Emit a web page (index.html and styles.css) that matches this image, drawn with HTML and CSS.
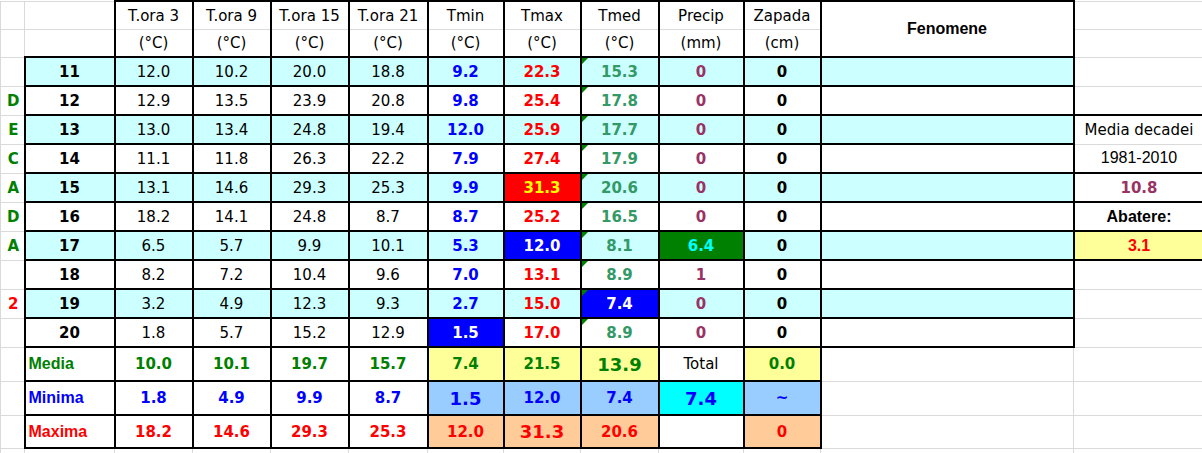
FILE: index.html
```html
<!DOCTYPE html>
<html>
<head>
<meta charset="utf-8">
<link rel="stylesheet" href="styles.css">
</head>
<body>
<table class="sheet">
<colgroup>
<col class="w-let"><col class="w-day"><col class="w-78"><col class="w-78"><col class="w-78"><col class="w-79"><col class="w-76"><col class="w-77"><col class="w-78"><col class="w-85"><col class="w-77"><col class="w-fen"><col class="w-right">
</colgroup>
<tr class="h1">
<td class="l"></td><td></td>
<td class="ht">T.ora 3</td><td class="ht">T.ora 9</td><td class="ht">T.ora 15</td><td class="ht">T.ora 21</td>
<td class="ht">Tmin</td><td class="ht">Tmax</td><td class="ht">Tmed</td><td class="ht">Precip</td><td class="ht">Zapada</td>
<td class="b fen" rowspan="2">Fenomene</td><td class="rt"></td>
</tr>
<tr class="h2">
<td class="l"></td><td></td>
<td class="hb">(°C)</td><td class="hb">(°C)</td><td class="hb">(°C)</td><td class="hb">(°C)</td>
<td class="hb">(°C)</td><td class="hb">(°C)</td><td class="hb">(°C)</td><td class="hb">(mm)</td><td class="hb">(cm)</td>
<td class="rt"></td>
</tr>

<tr class="d cy">
<td class="l"></td><td class="b m day">11</td>
<td class="b m n">12.0</td><td class="b m n">10.2</td><td class="b m n">20.0</td><td class="b m n">18.8</td>
<td class="b m mn">9.2</td><td class="b m mx">22.3</td><td class="b m md">15.3</td><td class="b m pr">0</td><td class="b m zp">0</td>
<td class="b m"></td><td class="rt"></td>
</tr>
<tr class="d">
<td class="l">D</td><td class="b m day">12</td>
<td class="b m n">12.9</td><td class="b m n">13.5</td><td class="b m n">23.9</td><td class="b m n">20.8</td>
<td class="b m mn">9.8</td><td class="b m mx">25.4</td><td class="b m md">17.8</td><td class="b m pr">0</td><td class="b m zp">0</td>
<td class="b m"></td><td class="rt"></td>
</tr>
<tr class="d cy">
<td class="l">E</td><td class="b m day">13</td>
<td class="b m n">13.0</td><td class="b m n">13.4</td><td class="b m n">24.8</td><td class="b m n">19.4</td>
<td class="b m mn">12.0</td><td class="b m mx">25.9</td><td class="b m md">17.7</td><td class="b m pr">0</td><td class="b m zp">0</td>
<td class="b m"></td><td class="rt r-top">Media decadei</td>
</tr>
<tr class="d">
<td class="l">C</td><td class="b m day">14</td>
<td class="b m n">11.1</td><td class="b m n">11.8</td><td class="b m n">26.3</td><td class="b m n">22.2</td>
<td class="b m mn">7.9</td><td class="b m mx">27.4</td><td class="b m md">17.9</td><td class="b m pr">0</td><td class="b m zp">0</td>
<td class="b m"></td><td class="rt r-bot ar">1981-2010</td>
</tr>
<tr class="d cy">
<td class="l">A</td><td class="b m day">15</td>
<td class="b m n">13.1</td><td class="b m n">14.6</td><td class="b m n">29.3</td><td class="b m n">25.3</td>
<td class="b m mn">9.9</td><td class="b m mx f-red">31.3</td><td class="b m md">20.6</td><td class="b m pr">0</td><td class="b m zp">0</td>
<td class="b m"></td><td class="rt b pr">10.8</td>
</tr>
<tr class="d">
<td class="l">D</td><td class="b m day">16</td>
<td class="b m n">18.2</td><td class="b m n">14.1</td><td class="b m n">24.8</td><td class="b m n">8.7</td>
<td class="b m mn">8.7</td><td class="b m mx">25.2</td><td class="b m md">16.5</td><td class="b m pr">0</td><td class="b m zp">0</td>
<td class="b m"></td><td class="rt b arb">Abatere:</td>
</tr>
<tr class="d cy">
<td class="l">A</td><td class="b m day">17</td>
<td class="b m n">6.5</td><td class="b m n">5.7</td><td class="b m n">9.9</td><td class="b m n">10.1</td>
<td class="b m mn">5.3</td><td class="b m mx f-blue">12.0</td><td class="b m md">8.1</td><td class="b m pr f-green">6.4</td><td class="b m zp">0</td>
<td class="b m"></td><td class="rt b arb dev">3.1</td>
</tr>
<tr class="d">
<td class="l"></td><td class="b m day">18</td>
<td class="b m n">8.2</td><td class="b m n">7.2</td><td class="b m n">10.4</td><td class="b m n">9.6</td>
<td class="b m mn">7.0</td><td class="b m mx">13.1</td><td class="b m md">8.9</td><td class="b m pr">1</td><td class="b m zp">0</td>
<td class="b m"></td><td class="rt"></td>
</tr>
<tr class="d cy">
<td class="l lr">2</td><td class="b m day">19</td>
<td class="b m n">3.2</td><td class="b m n">4.9</td><td class="b m n">12.3</td><td class="b m n">9.3</td>
<td class="b m mn">2.7</td><td class="b m mx">15.0</td><td class="b m md f-blue">7.4</td><td class="b m pr">0</td><td class="b m zp">0</td>
<td class="b m"></td><td class="rt"></td>
</tr>
<tr class="d">
<td class="l"></td><td class="b m day">20</td>
<td class="b m n">1.8</td><td class="b m n">5.7</td><td class="b m n">15.2</td><td class="b m n">12.9</td>
<td class="b m mn f-blue">1.5</td><td class="b m mx">17.0</td><td class="b m md">8.9</td><td class="b m pr">0</td><td class="b m zp">0</td>
<td class="b m"></td><td class="rt"></td>
</tr>

<tr class="s">
<td class="l"></td><td class="b lab c-g">Media</td>
<td class="b c-g">10.0</td><td class="b c-g">10.1</td><td class="b c-g">19.7</td><td class="b c-g">15.7</td>
<td class="b c-g s-yel">7.4</td><td class="b c-g s-yel">21.5</td><td class="b c-g s-yel big">13.9</td><td class="b tot">Total</td><td class="b c-g s-yel">0.0</td>
<td></td><td class="rt"></td>
</tr>
<tr class="s">
<td class="l"></td><td class="b lab c-b">Minima</td>
<td class="b c-b">1.8</td><td class="b c-b">4.9</td><td class="b c-b">9.9</td><td class="b c-b">8.7</td>
<td class="b c-b s-blu big">1.5</td><td class="b c-b s-blu">12.0</td><td class="b c-b s-blu">7.4</td><td class="b c-b s-cyan big">7.4</td><td class="b c-b s-blu">~</td>
<td></td><td class="rt"></td>
</tr>
<tr class="s s3">
<td class="l"></td><td class="b lab c-r">Maxima</td>
<td class="b c-r">18.2</td><td class="b c-r">14.6</td><td class="b c-r">29.3</td><td class="b c-r">25.3</td>
<td class="b c-r s-pea">12.0</td><td class="b c-r s-pea big">31.3</td><td class="b c-r s-pea">20.6</td><td class="b"></td><td class="b c-r s-pea">0</td>
<td></td><td class="rt"></td>
</tr>
<tr class="f">
<td class="l"></td><td></td><td></td><td></td><td></td><td></td><td></td><td></td><td></td><td></td><td></td><td></td><td class="rt"></td>
</tr>
</table>
</body>
</html>
```

FILE: styles.css
```css
html, body {
  margin: 0;
  padding: 0;
  background: #fff;
  overflow: hidden;
}

.sheet {
  border-collapse: collapse;
  table-layout: fixed;
  width: 1204px;
  font-family: "DejaVu Sans", sans-serif;
  font-size: 14px;
  color: #000;
}

.w-let { width: 24px; }
.w-day { width: 90px; }
.w-76 { width: 76px; }
.w-77 { width: 77px; }
.w-78 { width: 78px; }
.w-79 { width: 79px; }
.w-85 { width: 85px; }
.w-fen { width: 253px; }
.w-right { width: 131px; }

.sheet td {
  border: 1px solid #dadada;
  padding: 0;
  text-align: center;
  vertical-align: middle;
  white-space: nowrap;
  overflow: hidden;
}

.sheet td.b { border: 2px solid #000; }

.h1 { height: 28px; }
.h2 { height: 28px; }
.d { height: 29px; }
.s { height: 34px; }
.s3 { height: 33px; }
.f { height: 20px; }

.sheet td.ht {
  border-top: 2px solid #000;
  border-left: 2px solid #000;
  border-right: 2px solid #000;
  font-size: 15px;
  padding-top: 2px;
}
.sheet td.hb {
  border-bottom: 2px solid #000;
  border-left: 2px solid #000;
  border-right: 2px solid #000;
  font-size: 15px;
}

.fen {
  font-family: "Liberation Sans", Arial, sans-serif;
  font-weight: bold;
  font-size: 16px;
}

.l {
  font-weight: bold;
  font-size: 15px;
  color: #008000;
}
.sheet td.l { padding-left: 2px; }
.lr { color: #ff0000; }

.day { font-weight: bold; font-size: 15px; }
.n { font-size: 15px; }
.mn { font-weight: bold; font-size: 15px; color: #0000ff; }
.mx { font-weight: bold; font-size: 15px; color: #ff0000; }
.md { font-weight: bold; font-size: 15px; color: #339966; position: relative; }
.md::before {
  content: "";
  position: absolute;
  left: 0;
  top: 0;
  border-top: 6px solid #008000;
  border-right: 6px solid transparent;
}
.pr { font-weight: bold; font-size: 15px; color: #993366; }
.zp { font-weight: bold; font-size: 15px; color: #000; }

.cy .m { background: #ccffff; }

.sheet .f-red { background: #ff0000; color: #ffff00; }
.sheet .f-blue { background: #0000ff; color: #fff; }
.sheet .f-green { background: #008000; color: #00ffff; }

.sheet td.r-top {
  border-top: 2px solid #000;
  border-left: 2px solid #000;
  border-right: 2px solid #000;
  font-size: 15px;
}
.sheet td.r-bot {
  border-bottom: 2px solid #000;
  border-left: 2px solid #000;
  border-right: 2px solid #000;
}
.ar {
  font-family: "Liberation Sans", Arial, sans-serif;
  font-size: 16px;
}
.arb {
  font-family: "Liberation Sans", Arial, sans-serif;
  font-weight: bold;
  font-size: 16px;
}
.dev { background: #ffff99; color: #ff0000; }

.c-g { color: #008000; font-weight: bold; font-size: 15px; }
.c-b { color: #0000ff; font-weight: bold; font-size: 15px; }
.c-r { color: #ff0000; font-weight: bold; font-size: 15px; }
.big { font-size: 18px; }
.tot { font-size: 15px; }

.sheet td.lab {
  font-family: "Liberation Sans", Arial, sans-serif;
  font-weight: bold;
  font-size: 16px;
  text-align: left;
  padding-left: 3px;
}

.s-yel { background: #ffff99; }
.s-blu { background: #99ccff; }
.s-cyan { background: #00ffff; }
.s-pea { background: #ffcc99; }
```
